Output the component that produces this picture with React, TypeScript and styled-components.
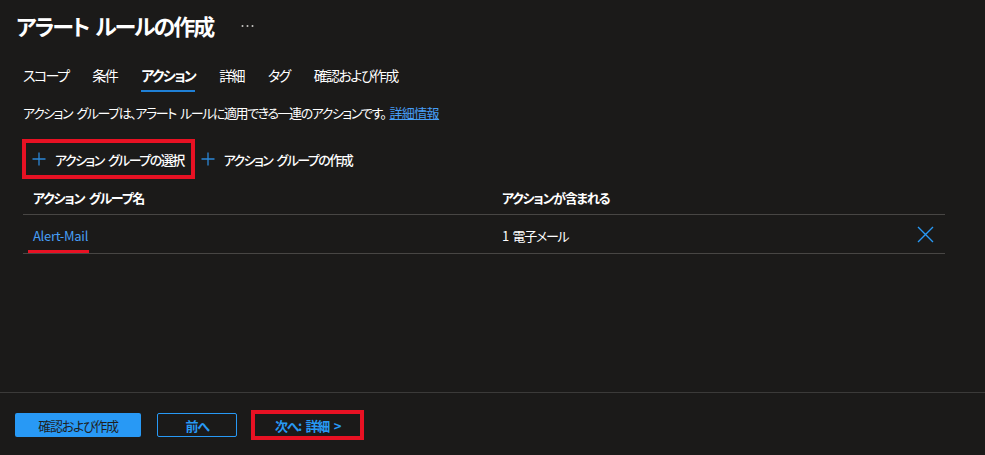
import React from "react";
import styled, { createGlobalStyle } from "styled-components";

const GlobalStyle = createGlobalStyle`
  html, body { margin: 0; padding: 0; background: #1b1a19; }
  body {
    font-family: "Noto Sans CJK JP", "Noto Sans", sans-serif;
    font-feature-settings: "palt";
    letter-spacing: -1.3px;
    word-spacing: 3px;
    color: #ffffff;
  }
  * { box-sizing: border-box; }
  button { letter-spacing: inherit; word-spacing: inherit; }
`;

const Page = styled.div`
  width: 985px;
  height: 455px;
  display: flex;
  flex-direction: column;
  background: #1b1a19;
  overflow: hidden;
`;

const Header = styled.header`
  display: flex;
  align-items: center;
  gap: 28px;
  padding: 9px 16px 0 16px;
  height: 41px;
`;

const Title = styled.h1`
  margin: 0;
  font-size: 22px;
  line-height: 32px;
  font-weight: 700;
  letter-spacing: -2px;
  word-spacing: 4px;
  color: #ffffff;
`;

const MoreButton = styled.span`
  display: flex;
  align-items: center;
  margin-top: 2px;
`;

const Content = styled.main`
  flex: 1;
  padding: 0 40px 0 23px;
  display: flex;
  flex-direction: column;
`;

const Tabs = styled.nav`
  display: flex;
  gap: 24px;
  margin-top: 24px;
`;

const Tab = styled.span<{ $active?: boolean }>`
  font-size: 14px;
  line-height: 20px;
  padding-bottom: 5px;
  letter-spacing: -1.6px;
  font-weight: ${(p) => (p.$active ? 700 : 400)};
  border-bottom: 2px solid ${(p) => (p.$active ? "#1f80d6" : "transparent")};
  color: #ffffff;
`;

const Description = styled.p`
  margin: 12px 0 0 0;
  font-size: 13px;
  line-height: 18px;
  letter-spacing: -1.45px;
  color: #ffffff;
`;

const Link = styled.a`
  color: #479ef5;
  text-decoration: underline;
  cursor: pointer;
  margin-left: 4px;
  letter-spacing: -0.6px;
`;

const CommandBar = styled.div`
  display: flex;
  align-items: center;
  margin-top: 17px;
  margin-left: -1px;
  margin-bottom: 1px;
`;

const Highlight = styled.div`
  border: 4px solid #e81123;
  display: flex;
  align-items: center;
`;

const CommandButton = styled.button`
  display: flex;
  align-items: center;
  gap: 9px;
  height: 32px;
  padding: 0 7px 0 6px;
  background: transparent;
  border: none;
  color: #ffffff;
  font-family: inherit;
  font-feature-settings: "palt";
  font-size: 13px;
  font-weight: 500;
  letter-spacing: -1.55px;
  white-space: nowrap;
  cursor: pointer;
`;

const Table = styled.div`
  display: grid;
  grid-template-columns: 479px 1fr 40px;
`;

const HeadCell = styled.div<{ $first?: boolean }>`
  height: 35px;
  display: flex;
  align-items: center;
  padding-left: ${(p) => (p.$first ? "10px" : "0")};
  font-size: 13px;
  font-weight: 700;
  border-bottom: 1px solid #484644;
`;

const Cell = styled.div<{ $first?: boolean }>`
  height: 39px;
  display: flex;
  align-items: center;
  padding-left: ${(p) => (p.$first ? "10px" : "0")};
  font-size: 13px;
  border-bottom: 1px solid #484644;
  padding-top: 2px;
`;

const IconCell = styled(Cell)`
  padding: 0;
  justify-content: center;
`;

const RowLink = styled.span`
  position: relative;
  color: #479ef5;
  letter-spacing: -0.3px;
  &::after {
    content: "";
    position: absolute;
    left: -5px;
    right: -1px;
    bottom: -8px;
    height: 3px;
    background: #e81123;
  }
`;

const Footer = styled.footer`
  border-top: 1px solid #3b3a39;
  height: 63px;
  padding: 17px 15px 0 15px;
  display: flex;
  align-items: flex-start;
`;

const ButtonRow = styled.div`
  display: flex;
  align-items: center;
  height: 30px;
`;

const PrimaryButton = styled.button`
  width: 126px;
  height: 24px;
  background: #2899f5;
  border: none;
  border-radius: 2px;
  color: #201f1e;
  font-family: inherit;
  font-feature-settings: "palt";
  font-size: 13px;
  font-weight: 400;
  margin-right: 16px;
  white-space: nowrap;
`;

const SecondaryButton = styled.button<{ $bordered?: boolean }>`
  height: ${(p) => (p.$bordered ? "24px" : "22px")};
  padding: 0;
  width: ${(p) => (p.$bordered ? "80px" : "auto")};
  background: transparent;
  border: ${(p) => (p.$bordered ? "1px solid #2899f5" : "none")};
  border-radius: 2px;
  color: #2899f5;
  font-family: inherit;
  font-feature-settings: "palt";
  font-size: 13px;
  font-weight: 700;
  white-space: nowrap;
`;

const NextHighlight = styled(Highlight)`
  margin-left: 14px;
  width: 113px;
  justify-content: center;
`;

const PlusIcon = () => (
  <svg width="14" height="14" viewBox="0 0 14 14" fill="none">
    <path d="M7 0.5V13.5M0.5 7H13.5" stroke="#2b86d6" strokeWidth="1.3" />
  </svg>
);

const CloseIcon = () => (
  <svg width="17" height="17" viewBox="0 0 17 17" fill="none">
    <path d="M1 1L16 16M16 1L1 16" stroke="#2899f5" strokeWidth="1.4" />
  </svg>
);

const MoreIcon = () => (
  <svg width="13" height="4" viewBox="0 0 13 4">
    <circle cx="1.5" cy="2" r="1" fill="#c8c6c4" />
    <circle cx="6.5" cy="2" r="1" fill="#c8c6c4" />
    <circle cx="11.5" cy="2" r="1" fill="#c8c6c4" />
  </svg>
);

const tabs = ["スコープ", "条件", "アクション", "詳細", "タグ", "確認および作成"];

export default function App() {
  return (
    <>
      <GlobalStyle />
      <Page>
        <Header>
          <Title>アラート ルールの作成</Title>
          <MoreButton>
            <MoreIcon />
          </MoreButton>
        </Header>
        <Content>
          <Tabs>
            {tabs.map((t) => (
              <Tab key={t} $active={t === "アクション"}>
                {t}
              </Tab>
            ))}
          </Tabs>
          <Description>
            アクション グループは、アラート ルールに適用できる一連のアクションです。
            <Link>詳細情報</Link>
          </Description>
          <CommandBar>
            <Highlight>
              <CommandButton>
                <PlusIcon />
                アクション グループの選択
              </CommandButton>
            </Highlight>
            <CommandButton>
              <PlusIcon />
              アクション グループの作成
            </CommandButton>
          </CommandBar>
          <Table>
            <HeadCell $first>アクション グループ名</HeadCell>
            <HeadCell>アクションが含まれる</HeadCell>
            <HeadCell />
            <Cell $first>
              <RowLink>Alert-Mail</RowLink>
            </Cell>
            <Cell>1 電子メール</Cell>
            <IconCell>
              <CloseIcon />
            </IconCell>
          </Table>
        </Content>
        <Footer>
          <ButtonRow>
            <PrimaryButton>確認および作成</PrimaryButton>
            <SecondaryButton $bordered>前へ</SecondaryButton>
            <NextHighlight>
              <SecondaryButton>次へ: 詳細 &gt;</SecondaryButton>
            </NextHighlight>
          </ButtonRow>
        </Footer>
      </Page>
    </>
  );
}
